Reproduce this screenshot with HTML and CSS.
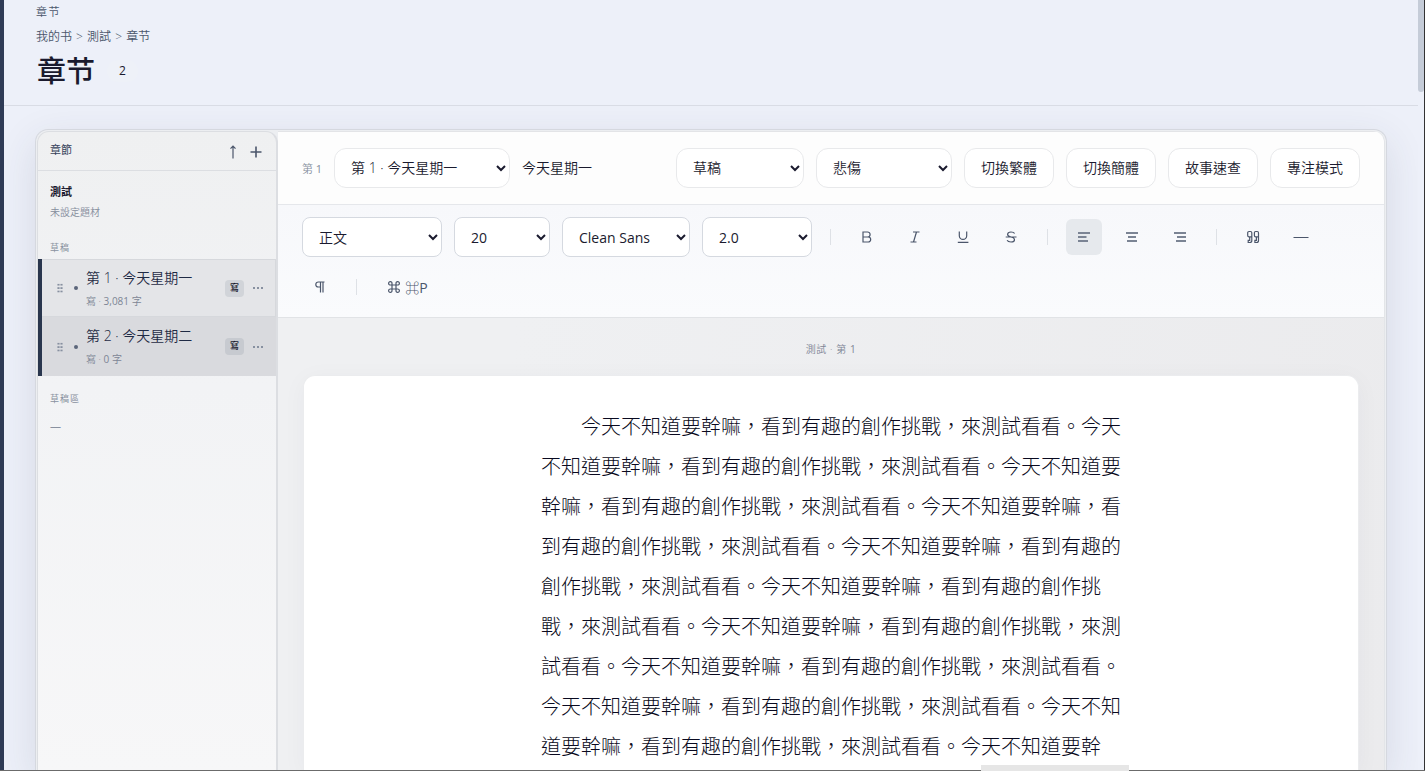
FILE: index.html
```
<!DOCTYPE html>
<html lang="zh-Hant">
<head>
    <meta charset="utf-8">
    <title>章节</title>
    <link rel="stylesheet" href="styles.css">
</head>
<body>
    <div class="app">
        <div class="rail"></div>
        <div class="main">
            <header class="page-header">
                <div class="eyebrow">章节</div>
                <nav class="crumbs">我的书 &gt; 測試 &gt; 章节</nav>
                <div class="title-row">
                    <h1>章节</h1>
                    <span class="count">2</span>
                </div>
            </header>

            <div class="workspace">
                <div class="panel">
                    <aside class="sidebar">
                        <div class="side-head">
                            <span>章節</span>
                            <div class="side-actions">
                                <svg width="8" height="14" viewBox="0 0 8 14"><path d="M4 1v12.500M1.500 3.700L4 1.200l2.500 2.500" fill="none" stroke="#4b566b" stroke-width="1.2"/></svg>
                                <svg width="12" height="12" viewBox="0 0 12 12"><path d="M6 .5v11M.5 6h11" stroke="#4b566b" stroke-width="1.6"/></svg>
                            </div>
                        </div>
                        <div class="book">
                            <div class="book-name">測試</div>
                            <div class="book-genre">未設定題材</div>
                        </div>
                        <div class="group">草稿</div>
                        <div class="chapter">
                            <span class="grip"></span>
                            <span class="dot"></span>
                            <div class="chapter-info">
                                <div class="chapter-title">第 1 · 今天星期一</div>
                                <div class="chapter-meta">寫 · <span class="num">3,081</span> 字</div>
                            </div>
                            <span class="tag">寫</span>
                            <span class="more"></span>
                        </div>
                        <div class="chapter active">
                            <span class="grip"></span>
                            <span class="dot"></span>
                            <div class="chapter-info">
                                <div class="chapter-title">第 2 · 今天星期二</div>
                                <div class="chapter-meta">寫 · <span class="num">0</span> 字</div>
                            </div>
                            <span class="tag">寫</span>
                            <span class="more"></span>
                        </div>
                        <div class="group second">草稿區</div>
                        <div class="none">—</div>
                    </aside>

                    <section class="editor">
                        <div class="bar">
                            <span class="index">第 <span class="num">1</span></span>
                            <select class="pill w176"><option>第 1 · 今天星期一</option></select>
                            <input class="name" type="text" value="今天星期一">
                            <select class="pill w128"><option>草稿</option></select>
                            <select class="pill w136"><option>悲傷</option></select>
                            <button class="pill">切換繁體</button>
                            <button class="pill">切換簡體</button>
                            <button class="pill">故事速查</button>
                            <button class="pill">專注模式</button>
                        </div>

                        <div class="format">
                            <select class="field w140"><option>正文</option></select>
                            <select class="field num w96"><option>20</option></select>
                            <select class="field num w128"><option>Clean Sans</option></select>
                            <select class="field num w110"><option>2.0</option></select>
                            <i class="sep"></i>
                            <button class="tool"><svg viewBox="0 0 16 16"><path d="M4 3v10h5.200a2.400 2.400 0 0 0 0-5H4h4.600a2.500 2.500 0 0 0 0-5z"/></svg></button>
                            <button class="tool"><svg viewBox="0 0 16 16"><path d="M6 3h6.500M3.500 13h6M9.500 3l-3 10"/></svg></button>
                            <button class="tool"><svg viewBox="0 0 16 16"><path d="M4.300 2.500v4.200a3.700 3.700 0 0 0 7.400 0V2.500M2.800 13.400h10.600"/></svg></button>
                            <button class="tool"><svg viewBox="0 0 16 16"><path d="M11.600 4.500C11 3.300 9.800 3 8 3 5.800 3 4.600 3.900 4.600 5.400c0 1.400 1.400 2 3.400 2.600 2.400.5 3.500 1.300 3.500 2.700 0 1.500-1.400 2.300-3.500 2.300-2 0-3.300-.5-3.900-1.700M2.700 8h10.800"/></svg></button>
                            <i class="sep"></i>
                            <button class="tool align on"><svg viewBox="0 0 16 16"><path d="M2 4h12M2 8h8.500M2 12h10"/></svg></button>
                            <button class="tool align"><svg viewBox="0 0 16 16"><path d="M2 4h12M4 8h8M3 12h10"/></svg></button>
                            <button class="tool align"><svg viewBox="0 0 16 16"><path d="M2 4h12M5 8h9M4 12h10"/></svg></button>
                            <i class="sep"></i>
                            <button class="tool"><svg viewBox="0 0 16 16"><path d="M6.800 7.800H4a1.300 1.300 0 0 1-1.300-1.300V3.800A1.300 1.300 0 0 1 4 2.500h1.500a1.300 1.300 0 0 1 1.300 1.300v7.700a2 2 0 0 1-2 2H3.200v-2.200h1.500V7.800M13.500 7.800h-2.800a1.300 1.300 0 0 1-1.300-1.300V3.800a1.300 1.300 0 0 1 1.300-1.300h1.500a1.300 1.300 0 0 1 1.300 1.300v7.700a2 2 0 0 1-2 2H9.900v-2.200h1.500V7.800"/></svg></button>
                            <button class="tool"><svg viewBox="0 0 16 16"><path d="M.5 8.500h15"/></svg></button>
                            <button class="tool"><svg viewBox="0 0 16 16"><path d="M12.500 3H6.300a2.400 2.400 0 0 0 0 5H8.500M8.500 3v10.500M11 3v10.500"/></svg></button>
                            <i class="sep"></i>
                            <button class="tool keys">
                                <svg viewBox="0 0 16 16"><path d="M6 6h4v4H6zM6 6H4.500A1.700 1.700 0 1 1 6 4.500zM10 6V4.500A1.700 1.700 0 1 1 11.500 6zM10 10h1.500a1.700 1.700 0 1 1-1.500 1.500zM6 10v1.500A1.700 1.700 0 1 1 4.500 10z"/></svg>
                                <span class="num">⌘P</span>
                            </button>
                        </div>

                        <div class="canvas">
                            <div class="running-head">測試 · 第 <span class="num">1</span></div>
                            <article class="sheet">
                                <p>今天不知道要幹嘛，看到有趣的創作挑戰，來測試看看。今天不知道要幹嘛，看到有趣的創作挑戰，來測試看看。今天不知道要幹嘛，看到有趣的創作挑戰，來測試看看。今天不知道要幹嘛，看到有趣的創作挑戰，來測試看看。今天不知道要幹嘛，看到有趣的創作挑戰，來測試看看。今天不知道要幹嘛，看到有趣的創作挑戰，來測試看看。今天不知道要幹嘛，看到有趣的創作挑戰，來測試看看。今天不知道要幹嘛，看到有趣的創作挑戰，來測試看看。今天不知道要幹嘛，看到有趣的創作挑戰，來測試看看。今天不知道要幹嘛，看到有趣的創作挑戰，來測試看看。今天不知道要幹</p>
                            </article>
                        </div>
                    </section>
                </div>
            </div>
        </div>
        <div class="scroll"><div class="thumb"></div></div>
    </div>
    <div class="bottom-tab"></div>
    <div class="bottom-line"></div>
</body>
</html>
```
FILE: styles.css
```
* {
    box-sizing: border-box;
}
html, body {
    margin: 0;
    height: 100%;
    overflow: hidden;
}
body {
    font-family: "Open Sans", "Noto Sans CJK TC", sans-serif;
    font-weight: 350;
    font-size: 14px;
    color: #1a1a2e;
    background: #edf0f9;
}
button, select, input {
    font: inherit;
    color: inherit;
}
.app {
    display: flex;
    height: 771px;
}
.rail {
    width: 4px;
    background: #2f3b56;
}
.main {
    flex: 1;
    min-width: 0;
}
.scroll {
    position: relative;
    width: 7px;
    border-right: 1px solid #333;
    background: #edf0f9;
}
.thumb {
    height: 92px;
    background: #c5ccd8;
    border-radius: 0 0 3px 3px;
}
.num {
    font-weight: 400;
}

/* header */
.page-header {
    position: relative;
    height: 106px;
    padding: 4px 32px 0;
    border-bottom: 1px solid #d9dce5;
}
.eyebrow {
    font-size: 11px;
    line-height: 16px;
    letter-spacing: 1.5px;
    color: #4b566b;
}
.crumbs {
    margin-top: 8px;
    font-size: 12px;
    line-height: 18px;
    word-spacing: 1px;
    color: #4b566b;
}
.title-row {
    display: flex;
    align-items: center;
    gap: 12px;
    height: 50px;
}
h1 {
    margin: 0;
    padding-left: 1px;
    font-size: 29px;
    font-weight: 500;
    line-height: 48px;
}
.count {
    width: 31px;
    height: 22px;
    border-radius: 11px;
    background: #eef1f8;
    font-size: 12px;
    font-weight: 400;
    line-height: 22px;
    text-align: center;
}

.workspace {
    padding: 23px 31px 0;
    height: 665px;
}
.panel {
    display: flex;
    height: 642px;
    padding: 1px 1px 0;
    border: 1px solid #d5d8df;
    border-bottom: 0;
    border-radius: 13px 13px 0 0;
    background: #eceef1;
    box-shadow: 0 12px 40px rgba(47, 59, 86, .12);
}

/* sidebar */
.sidebar {
    flex: none;
    width: 241px;
    border: 1px solid #dcdee2;
    border-right-width: 2px;
    border-bottom: 0;
    border-radius: 12px 12px 0 0;
    background: linear-gradient(#eff0f1, #f2f3f5 40%, #f7f7f8);
}
.side-head {
    display: flex;
    align-items: center;
    justify-content: space-between;
    height: 39px;
    padding: 0 14px 4px 12px;
    border-bottom: 1px solid #dcdee2;
    font-size: 11px;
    font-weight: 400;
    color: #36425a;
}
.side-actions {
    display: flex;
    align-items: center;
    gap: 13px;
    padding-top: 5px;
}
.book {
    height: 65px;
    padding: 13px 12px 0;
}
.book-name {
    font-size: 11px;
    font-weight: 600;
    line-height: 16px;
}
.book-genre {
    margin-top: 5px;
    font-size: 10px;
    line-height: 15px;
    color: #858d9c;
}
.group {
    height: 23px;
    padding-left: 12px;
    font-size: 9px;
    font-weight: 400;
    line-height: 23px;
    letter-spacing: 1px;
    color: #8991a0;
}
.group.second {
    margin-top: 11px;
}
.none {
    padding: 8px 12px;
    font-size: 11px;
    font-weight: 400;
    color: #8991a0;
}
.chapter {
    display: flex;
    align-items: center;
    height: 58px;
    padding-right: 12px;
    box-shadow: inset 4px 0 #29364e, inset 0 0 0 1px #d6d8dc;
    background: #e4e5e8;
}
.chapter.active {
    height: 59px;
    box-shadow: inset 4px 0 #29364e;
    background: #d9dade;
}
.grip {
    width: 6px;
    height: 10px;
    margin-left: 19px;
    background: radial-gradient(circle, #8790a0 1px, transparent 1.2px) 0 0 / 3px 3.400px;
}
.dot {
    width: 4px;
    height: 4px;
    margin: 0 8px 0 11px;
    border-radius: 50%;
    background: #5b657a;
}
.chapter-info {
    flex: 1;
}
.chapter-title {
    font-size: 14px;
    line-height: 22px;
    color: #1f2a44;
}
.chapter-meta {
    margin-top: 3px;
    font-size: 10px;
    line-height: 18px;
    color: #7d8595;
}
.tag {
    width: 19px;
    height: 17px;
    margin-right: 9px;
    border-radius: 4px;
    background: rgba(47, 69, 86, .1);
    font-size: 9px;
    font-weight: 500;
    line-height: 16px;
    text-align: center;
}
.more {
    width: 11px;
    height: 2px;
    background: linear-gradient(90deg, #8790a0 2px, transparent 2px) 0 0 / 4px 2px;
}

/* editor */
.editor {
    flex: 1;
    min-width: 0;
    display: flex;
    flex-direction: column;
    border-right: 1px solid #e3e5e8;
    border-radius: 0 12px 0 0;
    overflow: hidden;
}
.bar {
    flex: none;
    display: flex;
    align-items: center;
    gap: 12px;
    height: 74px;
    padding: 0 24px;
    border-top: 1px solid #e3e4e7;
    border-bottom: 1px solid #e5e7eb;
    background: #fdfdfd;
}
.index {
    width: 20px;
    font-size: 11px;
    white-space: nowrap;
    color: #858d9c;
}
.pill {
    flex: none;
    width: 90px;
    height: 40px;
    padding: 0 0 2px;
    border: 1px solid #e8e9eb;
    border-radius: 12px;
    background: #fff;
}
select.pill {
    padding: 0 12px 2px;
}
.name {
    flex: 1;
    min-width: 0;
    height: 40px;
    padding: 0 0 2px;
    border: 0;
    background: none;
}
.format {
    flex: none;
    display: flex;
    flex-wrap: wrap;
    align-items: center;
    align-content: flex-start;
    gap: 12px;
    height: 113px;
    padding: 12px 24px;
    border-bottom: 1px solid #e1e3e6;
    background: linear-gradient(#f7f8fb, #fafbfd);
}
.field {
    height: 40px;
    padding: 0 12px;
    border: 1px solid #d5d9e0;
    border-radius: 8px;
    background: #fff;
}
.w96 {
    width: 96px;
}
.w110 {
    width: 110px;
}
.w128 {
    width: 128px;
}
.w136 {
    width: 136px;
}
.w140 {
    width: 140px;
}
.w176 {
    width: 176px;
}
.sep {
    width: 1px;
    height: 16px;
    margin: 0 6px;
    background: #dee1e6;
}
.tool {
    display: flex;
    align-items: center;
    justify-content: center;
    width: 36px;
    height: 36px;
    padding: 0;
    border: 0;
    border-radius: 6px;
    background: none;
    color: #4b566b;
}
.tool svg {
    width: 16px;
    height: 16px;
    fill: none;
    stroke: #4b566b;
    stroke-width: 1.2;
}
.tool.align svg {
    stroke: #7b8494;
    stroke-width: 1.8;
}
.tool.on {
    background: #e6e9ed;
}
.tool.keys {
    gap: 3px;
    width: 64px;
}
.canvas {
    flex: 1;
    min-height: 0;
    display: flex;
    flex-direction: column;
    padding: 0 25px;
    background: linear-gradient(100deg, #eff0f2 20%, #ebebed);
}
.running-head {
    flex: none;
    height: 57px;
    padding-top: 3px;
    font-size: 10px;
    line-height: 56px;
    letter-spacing: .6px;
    text-align: center;
    color: #7d8595;
}
.sheet {
    flex: 1;
    min-height: 0;
    padding-top: 30px;
    border: 1px solid #ebecee;
    border-bottom: 0;
    border-radius: 12px 12px 0 0;
    background: #fff;
    box-shadow: 0 4px 24px rgba(47, 59, 86, .04);
}
.sheet p {
    width: 580px;
    margin: 0 auto;
    font-family: "Noto Sans CJK TC", sans-serif;
    font-size: 20px;
    font-weight: 300;
    line-height: 40px;
    text-indent: 2em;
    color: #0a0a20;
}

/* window edge */
.bottom-tab {
    position: absolute;
    left: 981px;
    bottom: 0;
    width: 148px;
    height: 6px;
    z-index: 1;
    background: #e6e6e6;
}
.bottom-line {
    position: absolute;
    left: 0;
    bottom: 0;
    width: 100%;
    height: 1px;
    background: #6b6b6b;
}
```
